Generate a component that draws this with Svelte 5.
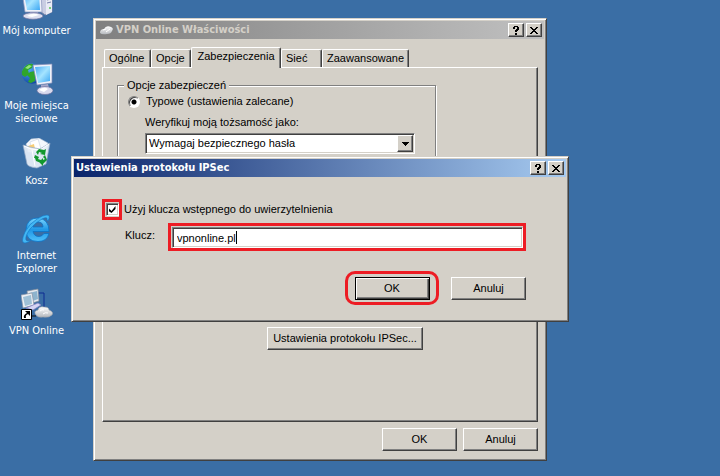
<script>
  const shortcuts = [
    { id: 'computer', label: 'Mój komputer' },
    { id: 'network', label: 'Moje miejsca sieciowe' },
    { id: 'bin', label: 'Kosz' },
    { id: 'ie', label: 'Internet Explorer' },
    { id: 'vpn', label: 'VPN Online' }
  ];
  const tabs = [
    { label: 'Ogólne', width: 47 },
    { label: 'Opcje', width: 40 },
    { label: 'Zabezpieczenia', width: 90 },
    { label: 'Sieć', width: 41 },
    { label: 'Zaawansowane', width: 87 }
  ];
  let active = $state('Zabezpieczenia');
  let usePreshared = $state(true);
  let key = $state('vpnonline.pl');
</script>

{#snippet captionButtons()}
  <span class="caption-buttons">
    <button class="raised" aria-label="Pomoc">
      <svg viewBox="0 0 8 9" width="8" height="9" shape-rendering="crispEdges"><path d="M2 0h4v1h1v3H6v1H5v1H3V4h1V3h1V1H3v2H1V1h1zM3 7h2v2H3z" /></svg>
    </button>
    <button class="raised" aria-label="Zamknij">
      <svg viewBox="0 0 8 7" width="8" height="7" shape-rendering="crispEdges"><path d="M0 0h2v1h1v1h2V1h1V0h2v1H7v1H6v1H5v1h1v1h1v1h1v1H6V6H5V5H3v1H2v1H0V6h1V5h1V4h1V3H2V2H1V1H0z" /></svg>
    </button>
  </span>
{/snippet}

<main class="desktop">
  <svg class="defs" width="0" height="0" aria-hidden="true">
    <defs>
      <linearGradient id="screen" x1="0" y1="0" x2="1" y2="1">
        <stop offset="0" stop-color="#49aaf5" /><stop offset=".5" stop-color="#a5e4ff" /><stop offset="1" stop-color="#3ca7f3" />
      </linearGradient>
      <radialGradient id="globe" cx=".35" cy=".3" r=".8">
        <stop offset="0" stop-color="#4fa8f5" /><stop offset="1" stop-color="#0a3d9c" />
      </radialGradient>
      <linearGradient id="ieBlue" x1="0" y1="0" x2="0" y2="1">
        <stop offset="0" stop-color="#7ad6ff" /><stop offset=".5" stop-color="#1f97e6" /><stop offset="1" stop-color="#4fc0fa" />
      </linearGradient>
      <linearGradient id="cloud" x1="0" y1="0" x2="0" y2="1">
        <stop offset="0" stop-color="#fff" /><stop offset="1" stop-color="#b4b8bd" />
      </linearGradient>
    </defs>
  </svg>

  <nav class="shortcuts" aria-label="Pulpit">
    {#each shortcuts as item (item.id)}
      <a href="#{item.id}">
        <svg viewBox="0 0 32 32" width="32" height="32" aria-hidden="true">
          {#if item.id === 'computer'}
            <path d="M20 5 27 3l4 3v18l-7 3-5-4Z" fill="#c9cde2" stroke="#7e86ab" />
            <path d="m25 9 6-2v17l-6 3Z" fill="#e9ebf5" />
            <path d="m26 12 4-1m-4 4 4-1" stroke="#777faa" />
            <circle cx="29" cy="20" r="1" fill="#50c64c" />
            <path d="M1 3h19l1 21H4Z" fill="#eef1fa" stroke="#8b95bb" stroke-width=".7" />
            <path d="M3 5h15l1 17H6Z" fill="url(#screen)" />
            <path d="M9 24h8l1 3H9Z" fill="#9ba0c5" />
            <ellipse cx="12" cy="28" rx="10" ry="3.200" fill="#dcdff0" stroke="#6f719f" stroke-width=".7" />
            <path d="M6 28q6-4 12-1l-7 2Z" fill="#fff" />
          {:else if item.id === 'network'}
            <circle cx="11" cy="10.500" r="10.300" fill="url(#globe)" />
            <path d="M2 6Q6 0 12 1l-1 4-4 2 1 4-4 3-3-2Q0 9 2 6ZM9 9l5-1v10l-4 2-3-1 2-4-3-3Z" fill="#2fa52c" />
            <path d="m4 5 4-3 3 1-4 3Z" fill="#93e57a" />
            <path d="m12 2 19-1v19l-15 2Z" fill="#eef1fa" stroke="#7f8ab4" stroke-width=".7" />
            <path d="m14 4 15-1v15l-12 2Z" fill="url(#screen)" />
            <path d="m20 22 7-1 1 4h-8Z" fill="#a5a8cb" />
            <ellipse cx="24" cy="27.500" rx="8" ry="4" fill="#d8d9ec" stroke="#6f719f" stroke-width=".7" />
            <path d="M18 27q5-4 9-1l-4 3Z" fill="#fff" />
          {:else if item.id === 'bin'}
            <path d="M5 6 10 1l8-1 9 5-2 10-18-1Z" fill="#f5f8fd" stroke="#a8bad0" stroke-width=".6" />
            <path d="m9 4 8-3 3 10-9 3Z" fill="#fff" stroke="#bbc9dc" stroke-width=".5" />
            <path d="m7 8 6-2 1 5-5 2Z" fill="#f6cd77" />
            <path d="m2 7 4 19q1 3 10 4l9-4 4-21-10 6-10-2Z" fill="#e5edf7" fill-opacity=".94" stroke="#92a8c4" stroke-width=".7" />
            <path d="m3 8 7 3 9 1 9-6M11 12l3 16" stroke="#fff" fill="none" />
            <path d="m15 14 3-3 5 1 2-1-1 6-5-1 2-1-3-1-1 3ZM14 17l4 2-1 2 3 1v3l-5-2-1-3-1 0ZM24 17l2 5-4 4v2l-4-4 4-4v2l2-1-2-2Z" fill="#12972d" />
          {:else if item.id === 'ie'}
            <path d="M28 18.500H12q1 5 6 5 3 0 5-3h5q-2 8-11 8-12 0-12-12Q6 5 17 5q11 1 11 13.500ZM12 14h10q0-5-5-5-4 0-5 5Z" fill="url(#ieBlue)" stroke="#0a74c8" stroke-width=".8" fill-rule="evenodd" />
            <path d="M27 8q3-6-1-6-4 0-10 4Q8 11 4 19q-5 11 0 11 3 0 6-3-4 2-5 0-1-4 4-11 6-7 12-10 6-3 5 1Z" fill="#43b7f3" stroke="#1276c6" stroke-width=".6" />
          {:else}
            <path d="M17 5h6v14" fill="none" stroke="#0c2b91" />
            <path d="m6 3 11-2 1 12-10 3Z" fill="#e5e8ed" stroke="#7e8998" stroke-width=".7" />
            <path d="m8 5 8-2 1 8-8 3Z" fill="#8db3cd" />
            <path d="m0 7 11-2 2 12-11 3Z" fill="#edf0f4" stroke="#8692a3" stroke-width=".7" />
            <path d="m2 9 8-2 1 9-7 2Z" fill="#9fc0d6" />
            <path d="m5 20 12-5 3 2-8 5Z" fill="#d5d4f3" stroke="#8581c4" stroke-width=".7" />
            <path d="M11 28h4" stroke="#111" />
            <path d="M15 27q-3-4 2-5 1-4 6-3 5 0 5 3 5 2 3 5-3 3-9 2-5 1-7-2Z" fill="url(#cloud)" stroke="#9da3a9" stroke-width=".6" />
            <path d="M19 23q2-2 4-1m-1 4q2-2 5-1" fill="none" stroke="#fff" />
            <path d="M.5 21.500h10v10H.5z" fill="#fff" stroke="#000" />
            <path d="M3 30q-1-3 3-5l-2-2h5v5L7 26q-3 1-2 4Z" fill="#000" />
          {/if}
        </svg>
        <span>{item.label}</span>
      </a>
    {/each}
  </nav>

  <section class="window properties" aria-label="VPN Online Właściwości">
    <header class="titlebar inactive">
      <svg viewBox="0 0 16 16" width="16" height="16" aria-hidden="true">
        <path d="M2 11q0-4 4-4 2-4 7-2 3 1 1 4-1 3-5 3-5 1-7-1Z" fill="url(#cloud)" />
        <path d="m5 8 3-1m0 3 4-3" stroke="#fff" />
      </svg>
      <h2>VPN Online Właściwości</h2>
      {@render captionButtons()}
    </header>
    <div class="body">
      <div class="tabs" role="tablist">
        {#each tabs as tab (tab.label)}
          <button
            role="tab"
            class:selected={active === tab.label}
            aria-selected={active === tab.label}
            style:width="{tab.width}px"
            onclick={() => (active = tab.label)}>{tab.label}</button>
        {/each}
      </div>
      <div class="panel" role="tabpanel">
        <fieldset>
          <legend>Opcje zabezpieczeń</legend>
          <label class="choice"><input type="radio" name="mode" checked />Typowe (ustawienia zalecane)</label>
          <div class="verify">
            <label for="identity">Weryfikuj moją tożsamość jako:</label>
            <div class="select">
              <select id="identity"><option>Wymagaj bezpiecznego hasła</option></select>
              <span class="arrow raised" aria-hidden="true">
                <svg viewBox="0 0 7 4" width="7" height="4" shape-rendering="crispEdges"><path d="M0 0h7v1H6v1H5v1H4v1H3V3H2V2H1V1H0z" /></svg>
              </span>
            </div>
          </div>
        </fieldset>
        <button class="push raised wide">Ustawienia protokołu IPSec...</button>
      </div>
      <footer>
        <button class="push raised">OK</button>
        <button class="push raised">Anuluj</button>
      </footer>
    </div>
  </section>

  <section class="window dialog" role="dialog" aria-label="Ustawienia protokołu IPSec">
    <header class="titlebar">
      <h2>Ustawienia protokołu IPSec</h2>
      {@render captionButtons()}
    </header>
    <form onsubmit={(e) => e.preventDefault()}>
      <div class="check-row">
        <span class="mark box"><input id="preshared" type="checkbox" bind:checked={usePreshared} /></span>
        <label for="preshared">Użyj klucza wstępnego do uwierzytelnienia</label>
      </div>
      <div class="key-row">
        <label for="key">Klucz:</label>
        <div class="mark field">
          <input id="key" type="text" bind:value={key} disabled={!usePreshared} />
          <span class="caret" aria-hidden="true"></span>
        </div>
      </div>
      <div class="actions">
        <span class="mark pill"><button class="push raised default" type="submit">OK</button></span>
        <button class="push raised" type="button">Anuluj</button>
      </div>
    </form>
  </section>
</main>

<style>
  :global(body) { margin: 0; background: #3a6ea5; }
  .desktop {
    --face: #d4d0c8;
    position: relative;
    min-height: 100vh;
    overflow: hidden;
    background: #3a6ea5;
    font: 11px/13px "Liberation Sans", Arial, sans-serif;
    color: #000;
  }
  .desktop * { box-sizing: border-box; }
  .defs { position: absolute; }
  button, input, select { font: inherit; color: inherit; margin: 0; padding: 0; border-radius: 0; }
  svg { display: block; flex: none; }

  .shortcuts {
    display: grid;
    grid-auto-rows: 75px;
    width: 73px;
    margin-top: -12px;
  }
  .shortcuts a {
    display: flex;
    flex-direction: column;
    align-items: center;
    gap: 4px;
    color: #fff;
    font: 11px/13px "DejaVu Sans Condensed", Tahoma, sans-serif;
    text-align: center;
    text-decoration: none;
  }

  .window {
    position: absolute;
    padding: 2px;
    background: var(--face);
    border: 1px solid;
    border-color: var(--face) #404040 #404040 var(--face);
    box-shadow: inset 1px 1px #fff, inset -1px -1px #808080;
  }
  .properties { left: 93px; top: 18px; width: 454px; }
  .dialog { left: 71px; top: 156px; width: 498px; }

  .titlebar {
    display: flex;
    align-items: center;
    height: 18px;
    padding: 0 2px;
    background: linear-gradient(90deg, #0a246a, #a6caf0);
    color: #fff;
  }
  .titlebar.inactive { background: linear-gradient(90deg, #808080, #c0c0c0); color: var(--face); gap: 2px; }
  h2 {
    flex: 1;
    margin: 0;
    font: bold 11px/14px "DejaVu Sans Condensed", Tahoma, sans-serif;
    white-space: nowrap;
  }
  .caption-buttons { display: flex; gap: 2px; }
  .caption-buttons button { display: grid; place-items: center; width: 16px; height: 14px; }

  .raised {
    background: var(--face);
    border: 1px solid;
    border-color: #fff #404040 #404040 #fff;
    box-shadow: inset -1px -1px #808080;
  }
  .push { width: 75px; height: 23px; }
  .push.wide { width: 156px; }
  .push.default { border-color: #000; box-shadow: inset 1px 1px #fff, inset -1px -1px #404040, inset -2px -2px #808080; }

  .body { padding: 8px 6px 7px; }
  .tabs { display: flex; align-items: flex-end; height: 20px; padding-left: 2px; }
  .tabs button {
    height: 18px;
    padding-left: 4px;
    text-align: left;
    background: var(--face);
    border: 1px solid;
    border-color: #fff #404040 transparent #fff;
    border-bottom: 0;
    border-radius: 2px 2px 0 0;
    box-shadow: inset -1px 0 #808080;
    white-space: nowrap;
  }
  .tabs .selected { position: relative; height: 21px; margin-bottom: -1px; padding: 0 0 3px; text-align: center; }

  .panel {
    display: flex;
    flex-direction: column;
    align-items: flex-start;
    height: 355px;
    padding: 11px 14px;
    border: 1px solid;
    border-color: #fff #404040 #404040 #fff;
    box-shadow: inset -1px -1px #808080;
  }
  fieldset {
    width: 319px;
    height: 232px;
    margin: 0;
    padding: 3px 10px;
    border: 1px solid #808080;
    box-shadow: 1px 1px #fff, inset 1px 1px #fff;
  }
  legend { margin-left: -4px; padding: 0 3px; background: var(--face); }
  .choice { display: flex; align-items: center; gap: 6px; }
  .verify { display: flex; flex-direction: column; gap: 4px; padding: 8px 10px 0 17px; }
  input[type='radio'] {
    appearance: none;
    width: 12px;
    height: 12px;
    border: 1px solid;
    border-color: #808080 #fff #fff #808080;
    border-radius: 50%;
    background: #fff;
    box-shadow: inset 1px 1px #404040;
  }
  input[type='radio']:checked { background: radial-gradient(circle, #000 2px, #fff 3px); }
  .select { position: relative; }
  select {
    display: block;
    width: 100%;
    height: 21px;
    padding-left: 3px;
    appearance: none;
    background: #fff;
    border: 1px solid;
    border-color: #808080 #fff #fff #808080;
    box-shadow: inset 1px 1px #404040, inset -1px -1px var(--face);
  }
  .arrow {
    position: absolute;
    top: 2px;
    right: 2px;
    display: grid;
    place-items: center;
    width: 16px;
    height: 17px;
    pointer-events: none;
  }
  .wide { margin-top: 16px; margin-left: 150px; }
  footer { display: flex; justify-content: flex-end; gap: 6px; padding-top: 6px; }

  form { padding: 22px 40px 14px 28px; }
  .mark { border: 3px solid #ed1c24; }
  .check-row { display: flex; align-items: center; gap: 2px; }
  .box { display: grid; place-items: center; width: 20px; height: 21px; }
  input[type='checkbox'] {
    appearance: none;
    display: grid;
    place-items: center;
    width: 13px;
    height: 13px;
    background: #fff;
    border: 1px solid;
    border-color: #808080 #fff #fff #808080;
    box-shadow: inset 1px 1px #404040, inset -1px -1px var(--face);
  }
  input[type='checkbox']:checked::before {
    content: '';
    width: 7px;
    height: 7px;
    background: #000;
    clip-path: polygon(0 29%, 43% 71%, 100% 0, 100% 43%, 43% 100%, 0 71%);
  }
  .key-row { display: flex; align-items: center; gap: 12px; margin-top: 3px; padding-left: 23px; }
  .key-row label { width: 31px; padding-bottom: 3px; }
  .field { position: relative; flex: 1; height: 28px; padding: 1px 0 0 1px; }
  .field input {
    display: block;
    width: 100%;
    height: 21px;
    padding: 0 4px;
    background: #fff;
    border: 1px solid;
    border-color: #808080 #fff #fff #808080;
    box-shadow: inset 1px 1px #404040, inset -1px -1px var(--face);
    outline: 0;
  }
  .caret { position: absolute; left: 65px; top: 5px; width: 1px; height: 13px; background: #000; }
  .actions { display: flex; align-items: center; justify-content: flex-end; gap: 12px; margin-top: 20px; }
  .pill { display: grid; place-items: center; width: 94px; height: 34px; border-radius: 10px; }
</style>
